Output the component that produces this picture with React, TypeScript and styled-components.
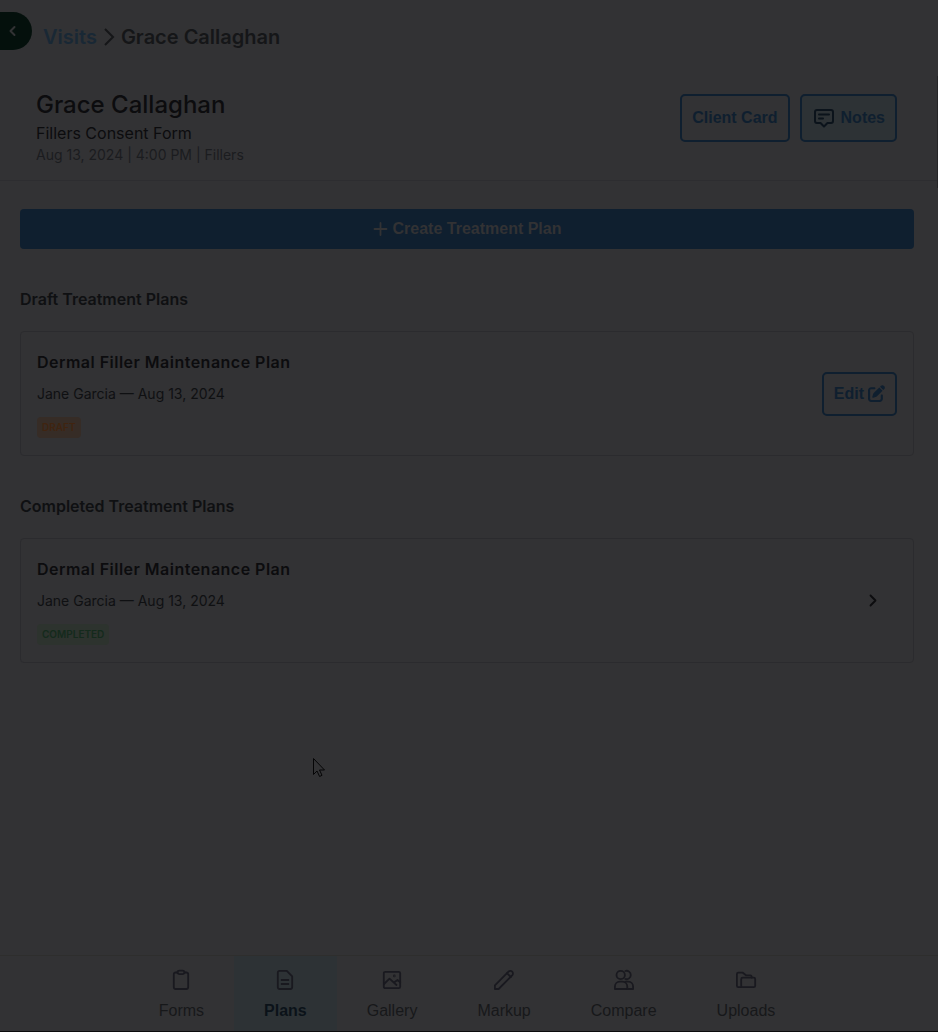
import React from "react";
import styled, { createGlobalStyle, css } from "styled-components";
import { FaPenToSquare } from "react-icons/fa6";

const c = {
  page: "#323234",
  line: "#2b2b2e",
  ink: "#0c0c0e",
  crumb: "#151618",
  text: "#0f1012",
  muted: "#1b1c1f",
  blue: "#0f1f2f",
  link: "#192835",
  tint: "#2d3235",
};

const GlobalStyle = createGlobalStyle`
  *, *::before, *::after { box-sizing: border-box; }
  body {
    margin: 0;
    background: ${c.page};
    color: ${c.ink};
    font-family: Inter, "Liberation Sans", sans-serif;
  }
  h1, h2, h3, p, ol { margin: 0; padding: 0; }
  button { font-family: "Liberation Sans", Arial, sans-serif; cursor: pointer; }
`;

const Page = styled.div`
  position: relative;
  display: flex;
  flex-direction: column;
  min-height: 100vh;
  border-bottom: 1px solid #0b0b0c;
`;

const ScrollThumb = styled.div`
  position: absolute;
  top: 76px;
  right: 0;
  width: 1px;
  height: 112px;
  background: #252527;
`;

const TopBar = styled.header`
  display: flex;
  align-items: flex-start;
  gap: 11px;
  padding-top: 12px;
`;

const CollapseButton = styled.button`
  display: flex;
  align-items: center;
  width: 32px;
  height: 38px;
  padding: 0 0 0 4px;
  border: 0;
  border-radius: 0 19px 19px 0;
  background: #04100c;
  color: #323234;
`;

const Crumbs = styled.ol`
  display: flex;
  align-items: center;
  gap: 6px;
  padding-top: 11px;
  list-style: none;
  font-size: 20px;
  font-weight: 600;
  line-height: 28px;
  color: ${c.crumb};

  li { display: flex; }
  a { color: ${c.link}; text-decoration: none; }
`;

const VisitHeader = styled.section`
  display: flex;
  justify-content: space-between;
  align-items: flex-start;
  padding: 38px 41px 15px 36px;
  border-bottom: 1px solid #2d2d30;
`;

const ClientName = styled.h1`
  font-size: 24px;
  font-weight: 500;
  line-height: 32px;
`;

const FormName = styled.p`
  font-size: 16px;
  line-height: 24px;
`;

const VisitMeta = styled.p`
  font-size: 14px;
  line-height: 20px;
  color: ${c.muted};
`;

const Actions = styled.div`
  display: flex;
  gap: 10px;
  padding-top: 5px;
`;

const OutlineButton = styled.button<{ $tinted?: boolean; $compact?: boolean }>`
  display: flex;
  align-items: center;
  gap: ${(p) => (p.$compact ? 4 : 5)}px;
  height: ${(p) => (p.$compact ? 44 : 48)}px;
  padding: 0 10px;
  border: 2px solid ${c.blue};
  border-radius: 5px;
  background: ${(p) => (p.$tinted ? c.tint : "transparent")};
  color: ${c.blue};
  font-size: 16px;
  font-weight: 700;
`;

const Main = styled.main`
  flex: 1;
  padding: 28px 24px 32px 20px;
`;

const CreateButton = styled.button`
  display: flex;
  align-items: center;
  justify-content: center;
  gap: 4px;
  width: 100%;
  height: 40px;
  border: 0;
  border-radius: 4px;
  background: ${c.blue};
  color: ${c.page};
  font-size: 16px;
  font-weight: 700;
`;

const PlanSection = styled.section`
  padding-top: 38px;
`;

const SectionTitle = styled.h2`
  margin-bottom: 20px;
  font-size: 16px;
  font-weight: 600;
  line-height: 24px;
  color: ${c.text};
`;

const Card = styled.article`
  display: flex;
  align-items: center;
  justify-content: space-between;
  height: 125px;
  padding: 0 16px;
  border: 1px solid ${c.line};
  border-radius: 4px;
`;

const PlanTitle = styled.h3`
  font-size: 16px;
  font-weight: 600;
  line-height: 24px;
  letter-spacing: 0.03em;
`;

const PlanMeta = styled.p`
  margin: 10px 0 13px;
  font-size: 14px;
  line-height: 20px;
  color: ${c.text};
`;

const Badge = styled.span<{ $tone: "draft" | "done" }>`
  display: block;
  width: fit-content;
  padding: 0 5px;
  border-radius: 4px;
  font-size: 10px;
  font-weight: 600;
  line-height: 21px;
  ${(p) =>
    p.$tone === "draft"
      ? css`background: #362c26; color: #402410;`
      : css`background: #2d332e; color: #142a1c;`}
`;

const OpenButton = styled.button`
  display: flex;
  padding: 0;
  margin-right: 16px;
  border: 0;
  background: none;
  color: ${c.ink};
`;

const TabBar = styled.nav`
  display: flex;
  justify-content: center;
  height: 76px;
  padding-right: 4px;
  border-top: 1px solid #2e2e2d;
`;

const Tab = styled.a<{ $active?: boolean }>`
  display: flex;
  flex-direction: column;
  align-items: center;
  gap: 10px;
  padding: 13px 30px 0;
  background: ${(p) => (p.$active ? c.tint : "transparent")};
  color: ${(p) => (p.$active ? "#0b1219" : "#17181a")};
  font-family: "Liberation Sans", Arial, sans-serif;
  font-size: 16px;
  font-weight: ${(p) => (p.$active ? 700 : 400)};
  line-height: 20px;
  text-decoration: none;

  svg { color: #19191f; }
`;

const Pointer = styled.svg`
  position: absolute;
  left: 312px;
  top: 757px;
  pointer-events: none;
`;

type IconProps = { size?: number; width?: number; children: React.ReactNode; box?: number };

const Icon = ({ size = 22, width = 1.8, box = 22, children }: IconProps) => (
  <svg
    width={size}
    height={size}
    viewBox={`0 0 ${box} ${box}`}
    fill="none"
    stroke="currentColor"
    strokeWidth={width}
    strokeLinejoin="round"
    strokeLinecap="round"
    aria-hidden="true"
  >
    {children}
  </svg>
);

const tabs = [
  { label: "Forms", icon: <><path d="M7.5 3.5H5.500A1.700 1.700 0 0 0 3.800 5.200V18.300A1.700 1.700 0 0 0 5.500 20h11a1.700 1.700 0 0 0 1.700-1.700V5.200a1.700 1.700 0 0 0-1.700-1.700h-2" /><path d="M7.500 3.300c0-1.200.8-1.700 2-1.700h3c1.200 0 2 .5 2 1.700s-.8 1.900-2 1.900h-3c-1.200 0-2-.7-2-1.900z" /></> },
  { label: "Plans", active: true, icon: <><path d="M12.800 1.800H5.500A1.700 1.700 0 0 0 3.800 3.500V18.300A1.700 1.700 0 0 0 5.500 20h11a1.700 1.700 0 0 0 1.700-1.700V7.400z" /><path d="M7.600 11h6.800M7.600 15h6.800" /></> },
  { label: "Gallery", icon: <><rect x="2.800" y="2.800" width="16.400" height="16.400" rx="1.500" /><path d="M3 15l5.500-5.300 7 6.300M13 13.500l3.500-2.500 2.700 2.200" /><circle cx="13.300" cy="6.900" r=".4" /></> },
  { label: "Markup", icon: <><path d="M1.900 20v-3.700L15.500 2.700a2.600 2.600 0 0 1 3.700 3.700L5.600 20z" /><path d="M14 4.200L17.800 8" /></> },
  { label: "Compare", icon: <><circle cx="7.700" cy="6" r="4.200" /><path d="M12.300 2a4.200 4.200 0 1 1 0 8" /><path d="M1.900 20v-2.300c0-3 2.200-5 4.800-5h2.600c2.700 0 5 2 5 5V20z" /><path d="M12.500 12.700h2.800c2.700 0 4.800 2 4.800 5V20h-6" /></> },
  { label: "Uploads", icon: <><path d="M6 18.200H3.400A1.500 1.500 0 0 1 1.900 16.700V5.200a1.500 1.500 0 0 1 1.500-1.500h4.400L11 6.300h4.200a1.500 1.500 0 0 1 1.500 1.500v.7" /><path d="M7.700 8.700h11a1.500 1.500 0 0 1 1.500 1.500v6.500a1.500 1.500 0 0 1-1.500 1.500h-11a1.500 1.500 0 0 1-1.500-1.500v-6.500a1.500 1.500 0 0 1 1.500-1.500z" /></> },
];

const PlanInfo = ({ tone, status }: { tone: "draft" | "done"; status: string }) => (
  <div>
    <PlanTitle>Dermal Filler Maintenance Plan</PlanTitle>
    <PlanMeta>Jane Garcia — Aug 13, 2024</PlanMeta>
    <Badge $tone={tone}>{status}</Badge>
  </div>
);

export default function App() {
  return (
    <>
      <GlobalStyle />
      <Page>
        <TopBar>
          <CollapseButton type="button" aria-label="Collapse">
            <Icon size={18} box={18} width={2}><path d="M10.500 5L6.500 9l4 4" /></Icon>
          </CollapseButton>
          <nav aria-label="Breadcrumb">
            <Crumbs>
              <li><a href="#visits">Visits</a></li>
              <li>
                <svg width="12" height="20" viewBox="0 0 12 20" fill="none" stroke="currentColor" strokeWidth="2" aria-hidden="true">
                  <path d="M2 2l8 8-8 8" />
                </svg>
              </li>
              <li>Grace Callaghan</li>
            </Crumbs>
          </nav>
        </TopBar>

        <VisitHeader>
          <div>
            <ClientName>Grace Callaghan</ClientName>
            <FormName>Fillers Consent Form</FormName>
            <VisitMeta>Aug 13, 2024 | 4:00 PM | Fillers</VisitMeta>
          </div>
          <Actions>
            <OutlineButton type="button">Client Card</OutlineButton>
            <OutlineButton type="button" $tinted>
              <svg width="24" height="24" viewBox="0 0 24 24" fill="none" stroke="#0b131b" strokeWidth="2" strokeLinejoin="round" strokeLinecap="round" aria-hidden="true">
                <path d="M5 4h14a2 2 0 0 1 2 2v9a2 2 0 0 1-2 2h-3.500L12 20.500 8.500 17H5a2 2 0 0 1-2-2V6a2 2 0 0 1 2-2z" />
                <path d="M7 8.500h10M7 12.500h4" />
              </svg>
              Notes
            </OutlineButton>
          </Actions>
        </VisitHeader>

        <Main>
          <CreateButton type="button">
            <Icon size={16} box={16}><path d="M7.500 2v12M1.500 8h12" /></Icon>
            Create Treatment Plan
          </CreateButton>

          <PlanSection>
            <SectionTitle>Draft Treatment Plans</SectionTitle>
            <Card>
              <PlanInfo tone="draft" status="DRAFT" />
              <OutlineButton type="button" $compact>
                Edit <FaPenToSquare size={17} aria-hidden="true" />
              </OutlineButton>
            </Card>
          </PlanSection>

          <PlanSection>
            <SectionTitle>Completed Treatment Plans</SectionTitle>
            <Card>
              <PlanInfo tone="done" status="COMPLETED" />
              <OpenButton type="button" aria-label="Open plan">
                <Icon size={16} box={16}><path d="M5.500 2.500l5 5-5 5" /></Icon>
              </OpenButton>
            </Card>
          </PlanSection>
        </Main>

        <TabBar aria-label="Visit sections">
          {tabs.map((t) => (
            <Tab key={t.label} href={`#${t.label.toLowerCase()}`} $active={t.active} aria-current={t.active ? "page" : undefined}>
              <Icon>{t.icon}</Icon>
              {t.label}
            </Tab>
          ))}
        </TabBar>

        <ScrollThumb />
        <Pointer width="14" height="21" viewBox="0 0 14 21" fill={c.page} stroke="#050506" strokeWidth="1" aria-hidden="true">
          <path d="M1.500 1.500v16l3.500-3.500 2.600 5.500 2.400-1.200L7.500 13h5z" />
        </Pointer>
      </Page>
    </>
  );
}
